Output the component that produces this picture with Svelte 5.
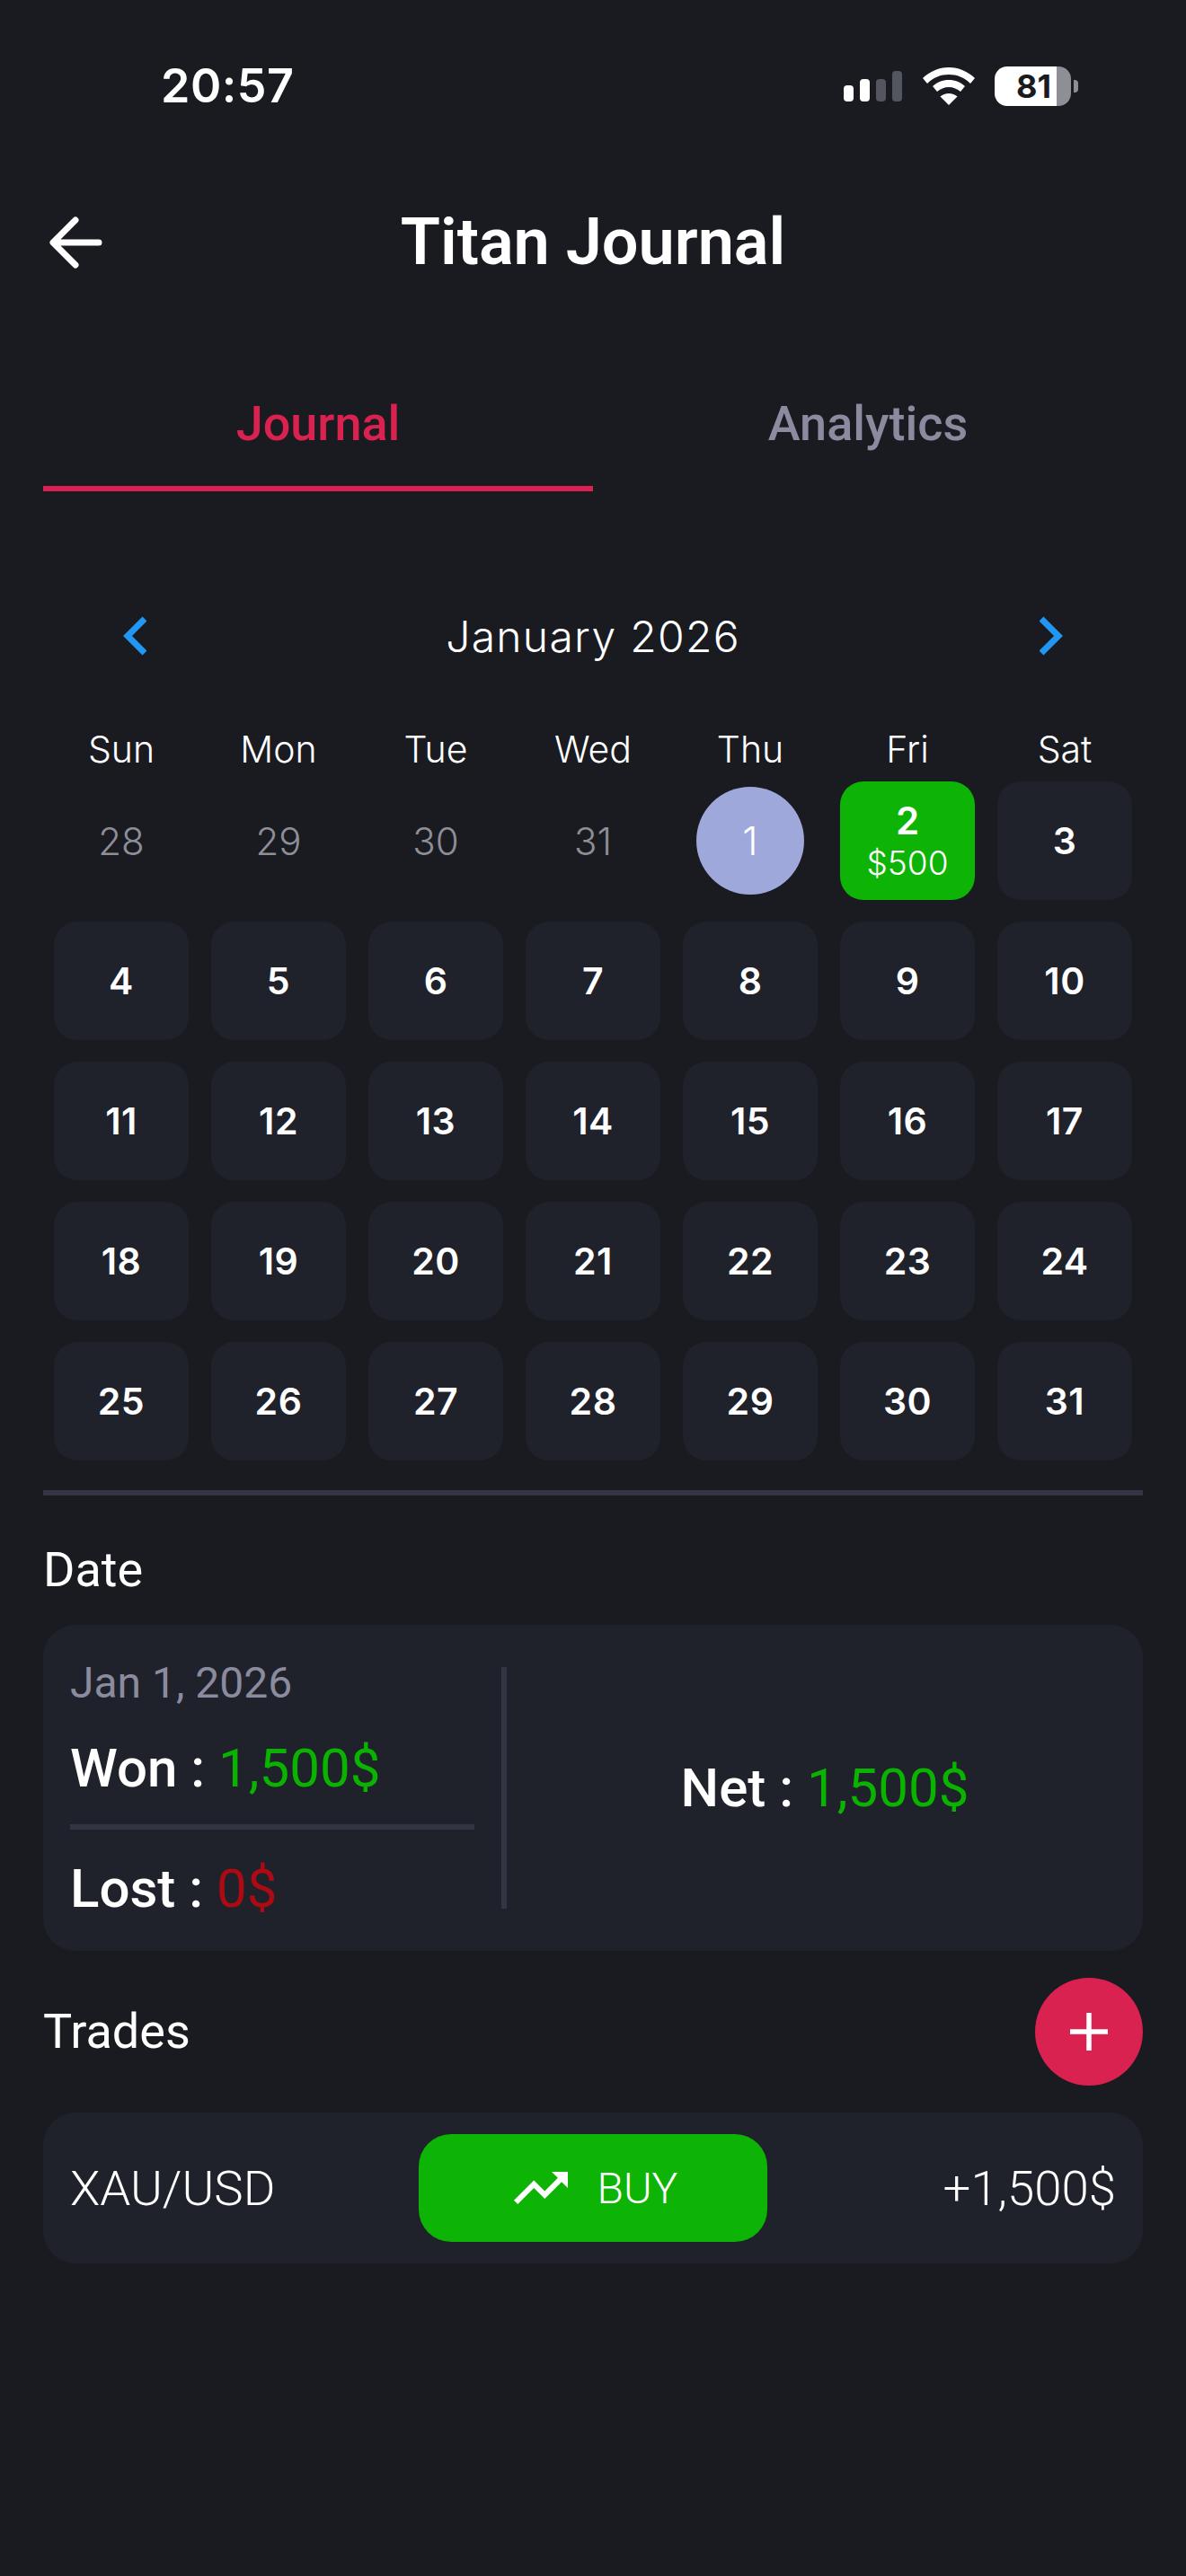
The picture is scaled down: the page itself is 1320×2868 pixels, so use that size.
<script>
  const weekdays = ['Sun', 'Mon', 'Tue', 'Wed', 'Thu', 'Fri', 'Sat'];
  const muted = [28, 29, 30, 31];
  const days = Array.from({ length: 29 }, (_, i) => i + 3);
</script>

<div class="screen">
  <div class="status">
    <span class="time">20:57</span>
    <div class="status-icons">
      <svg class="signal" width="66" height="34" viewBox="0 0 66 34">
        <rect x="0" y="16" width="11" height="18" rx="4" fill="#fff" />
        <rect x="18" y="9" width="11" height="25" rx="4" fill="#fff" />
        <rect x="36" y="9" width="11" height="25" rx="4" fill="#54565f" />
        <rect x="54" y="0" width="11" height="34" rx="4" fill="#54565f" />
      </svg>
      <svg class="wifi" width="58" height="42" viewBox="0 0 58 42">
        <path d="M29 0C18 0 8 4.500 0 12l5 6C12 11 20 8 29 8s17 3 24 10l5-6C50 4.500 40 0 29 0z" fill="#fff" />
        <path d="M29 14c-7 0-13 2.500-18 7l5 6c3.500-3 8-5 13-5s9.500 2 13 5l5-6c-5-4.500-11-7-18-7z" fill="#fff" />
        <path d="M29 29c-3.500 0-7 1.300-9.500 3.600L29 42l9.500-9.400C36 30.300 32.500 29 29 29z" fill="#fff" />
      </svg>
      <div class="battery">
        <span class="battery-fill">81</span>
        <span class="battery-rest"></span>
        <span class="battery-tip"></span>
      </div>
    </div>
  </div>

  <header class="topbar">
    <svg class="back" width="60" height="60" viewBox="0 0 60 60" fill="none" stroke="#fff" stroke-width="7" stroke-linecap="round" stroke-linejoin="round">
      <path d="M56 30H6M30 5L5 30l25 25" />
    </svg>
    <h1>Titan Journal</h1>
  </header>

  <nav class="tabs">
    <div class="tab active">Journal</div>
    <div class="tab">Analytics</div>
  </nav>

  <section class="calendar">
    <div class="month">
      <svg width="26" height="44" viewBox="0 0 26 44" fill="none" stroke="#2196f3" stroke-width="7"><path d="M24 3 5 22l19 19" /></svg>
      <span>January 2026</span>
      <svg width="26" height="44" viewBox="0 0 26 44" fill="none" stroke="#2196f3" stroke-width="7"><path d="M2 3l19 19L2 41" /></svg>
    </div>
    <div class="grid weekdays">
      {#each weekdays as day}
        <div>{day}</div>
      {/each}
    </div>
    <div class="grid days">
      {#each muted as day}
        <div class="cell muted">{day}</div>
      {/each}
      <div class="cell today"><span>1</span></div>
      <div class="cell profit">
        <b>2</b>
        <small>$500</small>
      </div>
      {#each days as day}
        <div class="cell day">{day}</div>
      {/each}
    </div>
  </section>

  <div class="divider"></div>

  <div class="label date-label">Date</div>
  <section class="summary">
    <div class="summary-left">
      <div class="summary-date">Jan 1, 2026</div>
      <div class="stat won">Won : <em class="green">1,500$</em></div>
      <div class="rule"></div>
      <div class="stat lost">Lost : <em class="red">0$</em></div>
    </div>
    <div class="vrule"></div>
    <div class="summary-net">
      <div class="stat">Net : <em class="green">1,500$</em></div>
    </div>
  </section>

  <div class="trades-head">
    <div class="label">Trades</div>
    <button class="add" aria-label="Add trade">
      <svg width="42" height="42" viewBox="0 0 42 42" fill="none" stroke="#fff" stroke-width="5.500"><path d="M21 0v42M0 21h42" /></svg>
    </button>
  </div>

  <section class="trade">
    <span class="pair">XAU/USD</span>
    <div class="buy">
      <svg width="72" height="72" viewBox="0 0 24 24" fill="#fff"><path d="M16 6l2.290 2.290-4.880 4.880-4-4L2 16.590 3.410 18l6-6 4 4 6.300-6.290L22 12V6z" /></svg>
      <span>BUY</span>
    </div>
    <span class="pnl">+1,500$</span>
  </section>
</div>

<style>
  :global(body) {
    margin: 0;
    background: #191b20;
  }

  .screen {
    width: 1320px;
    height: 2868px;
    box-sizing: border-box;
    padding: 0 48px;
    background: #191b20;
    color: #fff;
    font-family: Roboto, sans-serif;
    overflow: hidden;
  }

  .status {
    display: flex;
    justify-content: space-between;
    align-items: center;
    height: 60px;
    padding: 66px 72px 0 131px;
  }

  .time {
    font-family: Inter, sans-serif;
    font-size: 52px;
    font-weight: 600;
    line-height: 60px;
    letter-spacing: 0.500px;
  }

  .status-icons {
    display: flex;
    align-items: center;
    gap: 22px;
  }

  .battery {
    display: flex;
    align-items: center;
    height: 44px;
  }

  .battery-fill {
    display: flex;
    align-items: center;
    justify-content: flex-end;
    box-sizing: border-box;
    width: 69px;
    height: 44px;
    padding-right: 6px;
    border-radius: 14px 0 0 14px;
    background: #fff;
    color: #191b20;
    font-family: Inter, sans-serif;
    font-size: 36px;
    font-weight: 700;
  }

  .battery-rest {
    width: 16px;
    height: 44px;
    border-radius: 0 14px 14px 0;
    background: #8e8e96;
  }

  .battery-tip {
    width: 5px;
    height: 14px;
    margin-left: 3px;
    border-radius: 0 4px 4px 0;
    background: #8e8e96;
  }

  .topbar {
    position: relative;
    display: flex;
    justify-content: center;
    align-items: center;
    height: 84px;
    margin-top: 100px;
  }

  .back {
    position: absolute;
    left: 6px;
    top: 14px;
  }

  h1 {
    margin: 4px 0 0;
    font-size: 72px;
    font-weight: 600;
    line-height: 84px;
  }

  .tabs {
    display: grid;
    grid-template-columns: 1fr 1fr;
    margin-top: 90px;
  }

  .tab {
    height: 147px;
    padding-top: 42px;
    box-sizing: border-box;
    border-bottom: 6px solid transparent;
    text-align: center;
    color: #8b8b9f;
    font-size: 54px;
    font-weight: 500;
    line-height: 60px;
  }

  .tab.active {
    color: #d9224f;
    border-bottom-color: #d9224f;
  }

  .calendar {
    margin: 0 12px;
  }

  .month {
    display: flex;
    justify-content: space-between;
    align-items: center;
    height: 60px;
    margin-top: 131px;
    padding: 0 77px;
    font-family: Inter, sans-serif;
    font-size: 48px;
    font-weight: 350;
    letter-spacing: 1.300px;
  }

  .grid {
    display: grid;
    grid-template-columns: repeat(7, 150px);
    column-gap: 25px;
  }

  .weekdays {
    margin-top: 72px;
    height: 48px;
    text-align: center;
    font-family: Inter, sans-serif;
    font-size: 41px;
    font-weight: 300;
    line-height: 48px;
  }

  .days {
    grid-auto-rows: 132px;
    row-gap: 24px;
    margin-top: 12px;
    font-family: Inter, sans-serif;
  }

  .cell {
    display: flex;
    flex-direction: column;
    justify-content: center;
    align-items: center;
    border-radius: 26px;
    font-size: 42px;
  }

  .muted {
    color: #8e8e98;
    font-weight: 300;
  }

  .today span {
    display: flex;
    justify-content: center;
    align-items: center;
    width: 120px;
    height: 120px;
    border-radius: 50%;
    background: #9fa8da;
    font-size: 44px;
    font-weight: 300;
  }

  .profit {
    background: #0db305;
  }

  .profit b {
    font-size: 42px;
    font-weight: 600;
    line-height: 50px;
  }

  .profit small {
    font-size: 37px;
    font-weight: 300;
    line-height: 44px;
  }

  .day {
    background: #1f222b;
    font-size: 41px;
    font-weight: 600;
    letter-spacing: 0.500px;
  }

  .divider {
    height: 6px;
    margin-top: 33px;
    background: #333545;
  }

  .label {
    font-size: 54px;
    font-weight: 400;
    line-height: 60px;
  }

  .date-label {
    margin-top: 53px;
  }

  .summary {
    display: flex;
    align-items: stretch;
    height: 363px;
    margin-top: 31px;
    padding: 47px 0 47px 30px;
    box-sizing: border-box;
    border-radius: 36px;
    background: #1f222b;
  }

  .summary-left {
    width: 450px;
  }

  .summary-date {
    color: #8b8b9f;
    font-size: 48px;
    font-weight: 400;
    line-height: 36px;
  }

  .stat {
    font-size: 60px;
    font-weight: 500;
    line-height: 70px;
  }

  .stat em {
    font-style: normal;
    font-weight: 400;
  }

  .green {
    color: #0ab300;
  }

  .red {
    color: #ad0a14;
  }

  .won {
    margin-top: 42px;
  }

  .rule {
    height: 6px;
    margin-top: 27px;
    background: #333545;
  }

  .lost {
    margin-top: 31px;
  }

  .vrule {
    width: 6px;
    height: 269px;
    margin-left: 30px;
    background: #333545;
  }

  .summary-net {
    flex: 1;
    display: flex;
    justify-content: center;
    align-items: center;
  }

  .trades-head {
    display: flex;
    justify-content: space-between;
    align-items: center;
    margin-top: 30px;
  }

  .add {
    display: flex;
    justify-content: center;
    align-items: center;
    width: 120px;
    height: 120px;
    padding: 0;
    border: 0;
    border-radius: 50%;
    background: #d9224f;
  }

  .trade {
    display: grid;
    grid-template-columns: 1fr 388px 1fr;
    align-items: center;
    height: 168px;
    margin-top: 30px;
    padding: 0 30px;
    box-sizing: border-box;
    border-radius: 36px;
    background: #1f222b;
    font-size: 54.500px;
    font-weight: 300;
  }

  .buy {
    display: flex;
    justify-content: center;
    align-items: center;
    gap: 27px;
    height: 120px;
    border-radius: 36px;
    background: #0db305;
    font-size: 48px;
  }

  .pnl {
    text-align: right;
  }
</style>
